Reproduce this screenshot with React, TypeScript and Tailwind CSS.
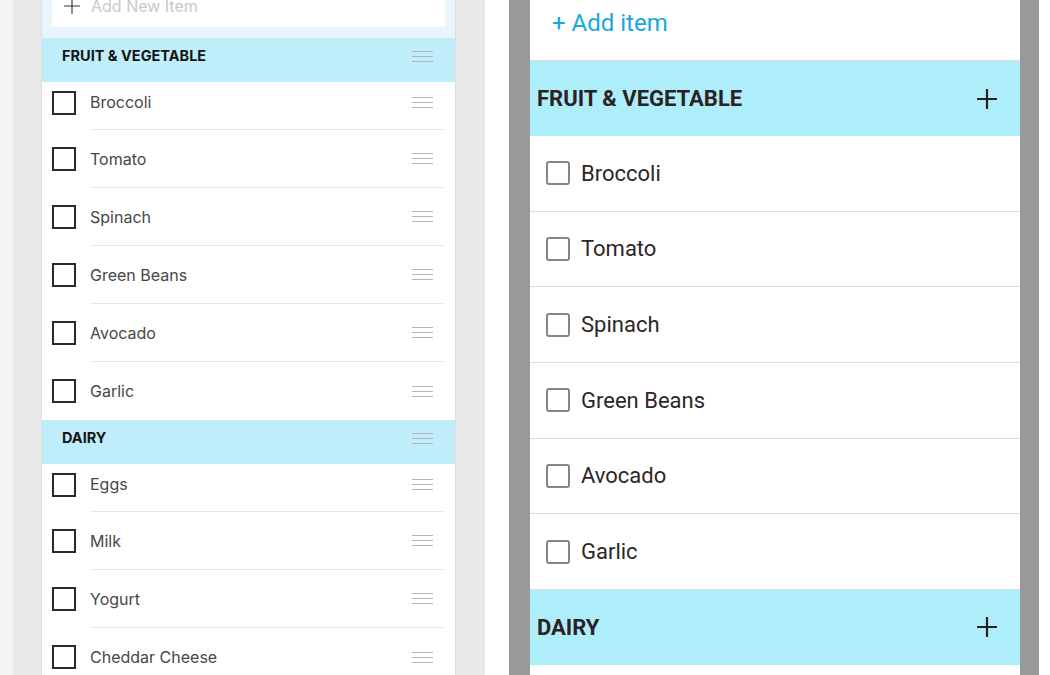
import React from "react";

type Category = { name: string; items: string[] };

const LEFT_LIST: Category[] = [
  { name: "FRUIT & VEGETABLE", items: ["Broccoli", "Tomato", "Spinach", "Green Beans", "Avocado", "Garlic"] },
  { name: "DAIRY", items: ["Eggs", "Milk", "Yogurt", "Cheddar Cheese"] },
];

const RIGHT_LIST: Category[] = [
  { name: "FRUIT & VEGETABLE", items: ["Broccoli", "Tomato", "Spinach", "Green Beans", "Avocado", "Garlic"] },
  { name: "DAIRY", items: ["Eggs"] },
];

function DragHandle() {
  return (
    <span className="flex w-[21px] flex-col gap-[4px]" aria-hidden="true">
      <span className="h-px w-full bg-[#b5b5b5]" />
      <span className="h-px w-full bg-[#b5b5b5]" />
      <span className="h-px w-full bg-[#b5b5b5]" />
    </span>
  );
}

function PlusIcon({ size, stroke, color }: { size: number; stroke: number; color: string }) {
  return (
    <svg width={size} height={size} viewBox="0 0 20 20" aria-hidden="true">
      <path d="M10 0v20M0 10h20" stroke={color} strokeWidth={stroke} fill="none" />
    </svg>
  );
}

function LeftPanel() {
  return (
    <div className="w-[415px] shrink-0 border-x border-[#dedede] bg-white font-['Inter',sans-serif]">
      {/* add new item, scrolled partly out of view */}
      <div className="flex h-[38px] flex-col bg-[#eaf5fb] px-[10px]">
        <div className="mt-[-15px] flex h-[42px] shrink-0 items-center gap-[11px] bg-white pl-[12px]">
          <PlusIcon size={16} stroke={1.4} color="#333" />
          <span className="text-[16px] text-[#c9c9c9]">Add New Item</span>
        </div>
      </div>

      {LEFT_LIST.map((cat) => (
        <div key={cat.name}>
          <div className="flex h-[44px] items-center justify-between bg-[#bfeefa] pb-[8px] pl-[20px] pr-[22px]">
            <span className="text-[14.5px] font-bold text-[#141414]">{cat.name}</span>
            <DragHandle />
          </div>
          {cat.items.map((item, i) => {
            const first = i === 0;
            const last = i === cat.items.length - 1;
            return (
              <div key={item} className={`flex pl-[10px] ${first ? "h-[48px]" : "h-[58px]"}`}>
                <div className={`flex items-center ${first ? "pb-[7px]" : ""}`}>
                  <span className="h-[24px] w-[24px] border-2 border-[#2b2b2b]" />
                </div>
                <div
                  className={`ml-[14px] mr-[11px] flex flex-1 items-center justify-between pr-[11px] ${
                    first ? "pb-[7px]" : ""
                  } ${last ? "" : "border-b border-[#e8e8e8]"}`}
                >
                  <span className="text-[16px] text-[#474747]">{item}</span>
                  <DragHandle />
                </div>
              </div>
            );
          })}
        </div>
      ))}
    </div>
  );
}

function RightPanel() {
  return (
    <div className="w-[490px] shrink-0 bg-white font-['Roboto',sans-serif]">
      <div className="h-[61px] border-b border-[#e6dede] pl-[22px] pt-[7px]">
        <span className="text-[24px] leading-[32px] text-[#17a8da]">+ Add item</span>
      </div>
      {RIGHT_LIST.map((cat) => (
        <div key={cat.name}>
          <div className="flex h-[75px] items-center justify-between bg-[#aeeefb] pl-[7px] pr-[23px]">
            <span className="text-[22px] font-bold text-[#2b2222]">{cat.name}</span>
            <PlusIcon size={20} stroke={2.2} color="#222" />
          </div>
          {cat.items.map((item) => (
            <div
              key={item}
              className="flex h-[75.67px] items-center gap-[11px] border-b border-[#dddddd] pl-[16px]"
            >
              <span className="h-[24px] w-[24px] rounded-[3px] border-2 border-[#858585]" />
              <span className="text-[22px] text-[#2e2626]">{item}</span>
            </div>
          ))}
        </div>
      ))}
    </div>
  );
}

export default function App() {
  return (
    <div className="flex h-[675px] w-[1050px] items-start overflow-hidden bg-white">
      <div className="h-full w-[13px] shrink-0 bg-[#f3f3f3]" />
      <div className="h-full w-[28px] shrink-0 bg-[#e9e9e9]" />
      <LeftPanel />
      <div className="h-full w-[29px] shrink-0 bg-[#e8e8e8]" />
      <div className="h-full w-[24px] shrink-0 bg-white" />
      <div className="h-full w-[21px] shrink-0 bg-[#999999]" />
      <RightPanel />
      <div className="h-full w-[19px] shrink-0 bg-[#999999]" />
      <div className="h-full flex-1 bg-white" />
    </div>
  );
}
